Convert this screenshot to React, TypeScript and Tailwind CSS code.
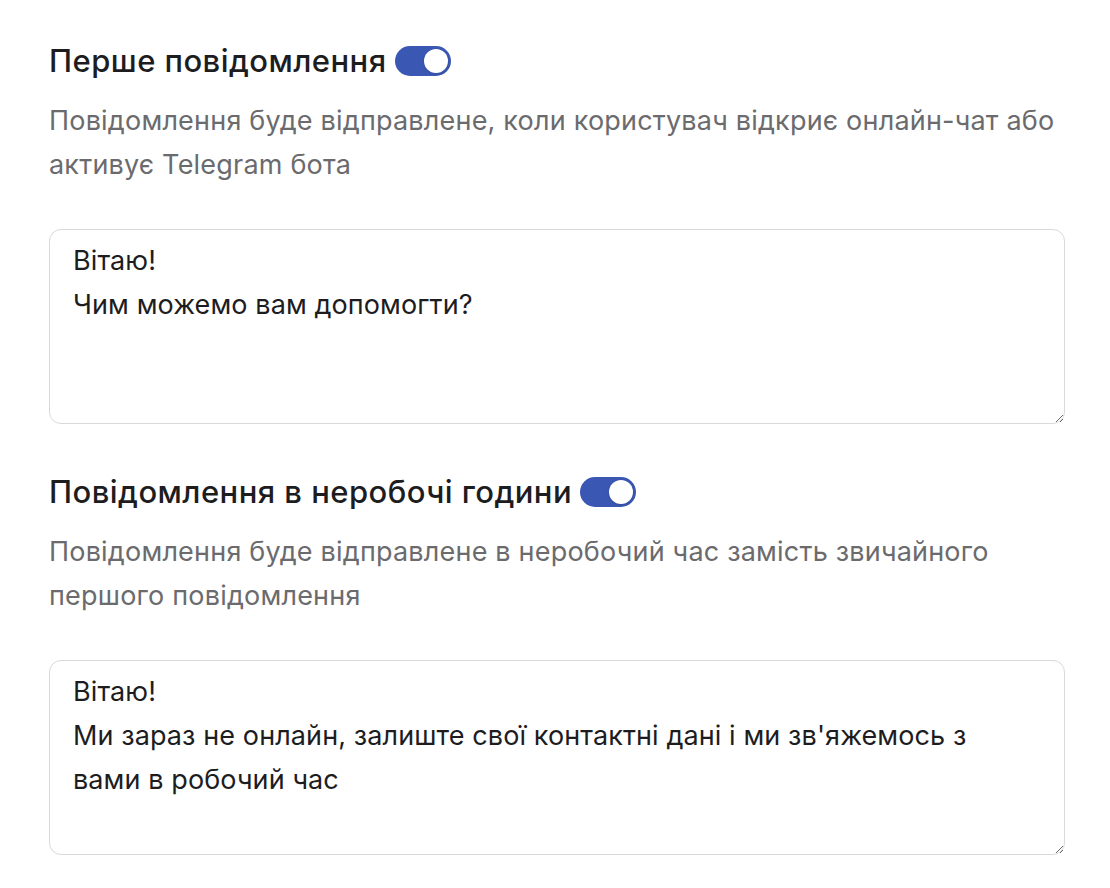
import { useState } from 'react'

const sections = [
  {
    id: 'first',
    title: 'Перше повідомлення',
    description:
      'Повідомлення буде відправлене, коли користувач відкриє онлайн-чат або активує Telegram бота',
    text: 'Вітаю!\nЧим можемо вам допомогти?',
  },
  {
    id: 'offline',
    title: 'Повідомлення в неробочі години',
    description:
      'Повідомлення буде відправлене в неробочий час замість звичайного першого повідомлення',
    text: "Вітаю!\nМи зараз не онлайн, залиште свої контактні дані і ми зв'яжемось з вами в робочий час",
  },
]

function Toggle({ on, onClick }: { on: boolean; onClick: () => void }) {
  return (
    <button
      type="button"
      onClick={onClick}
      className={`relative inline-flex h-[30px] w-[56px] shrink-0 items-center rounded-full transition-colors ${
        on ? 'bg-[#3a57b3]' : 'bg-gray-300'
      }`}
    >
      <span
        className={`inline-block h-[24px] w-[24px] rounded-full bg-white shadow transition-transform ${
          on ? 'translate-x-[29px]' : 'translate-x-[3px]'
        }`}
      />
    </button>
  )
}

export default function App() {
  const [enabled, setEnabled] = useState<Record<string, boolean>>({ first: true, offline: true })

  return (
    <div className="min-h-screen bg-white pl-[49px] pr-[45px] pt-[41px] font-['Inter','Noto_Sans',sans-serif] text-[#1d1d1f]">
      {sections.map((s, i) => (
        <section key={s.id} className={i > 0 ? 'mt-[48px]' : ''}>
          {/* Header with toggle */}
          <div className="flex items-center gap-[8px]">
            <h2 className="text-[31px] font-medium leading-[40px] tracking-[0.45px]">{s.title}</h2>
            <Toggle on={enabled[s.id]} onClick={() => setEnabled({ ...enabled, [s.id]: !enabled[s.id] })} />
          </div>
          <p className="mt-[18px] text-[27px] leading-[44px] tracking-[0.2px] text-[#6b6b6e]">{s.description}</p>
          <textarea
            defaultValue={s.text}
            className="mt-[42px] block h-[195px] w-full rounded-[12px] border-[1.5px] border-[#d9d9d9] px-[23px] pt-[9px] text-[27px] leading-[44px] tracking-[0.1px] text-[#1d1d1f] outline-none"
          />
        </section>
      ))}
    </div>
  )
}
